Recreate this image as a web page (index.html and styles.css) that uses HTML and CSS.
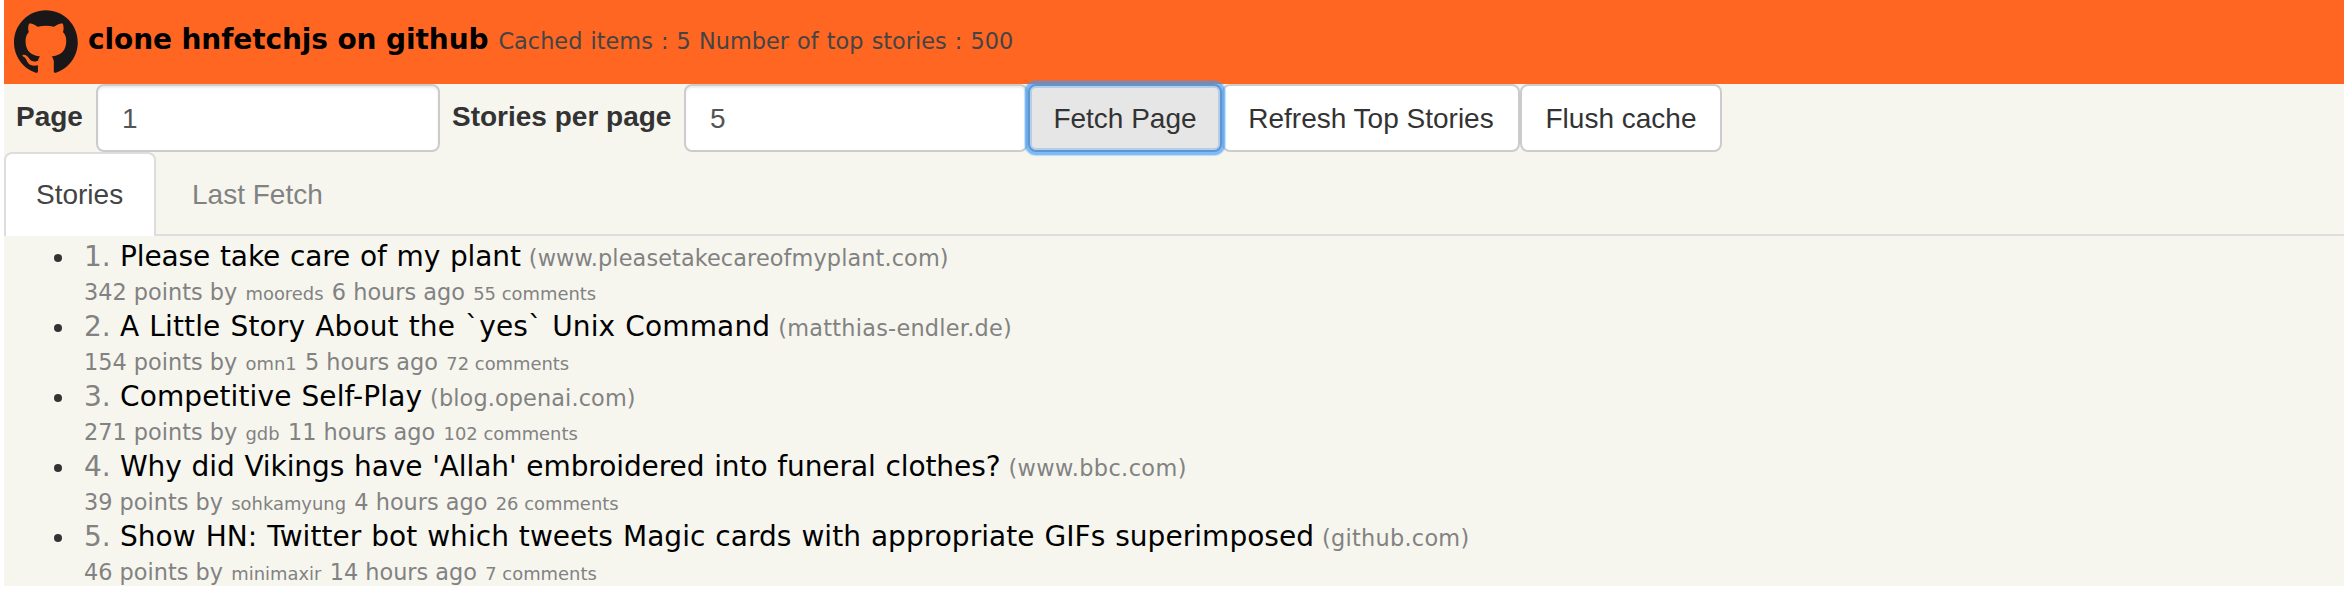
FILE: index.html
```html
<!DOCTYPE html>
<html lang="en">
<head>
<meta charset="utf-8">
<title>hnfetchjs</title>
<link rel="stylesheet" href="styles.css">
</head>
<body>
<header class="topbar">
  <svg class="logo" viewBox="0 0 98 96" aria-hidden="true"><path fill-rule="evenodd" d="M48.854 0C21.839 0 0 22 0 49.217c0 21.756 13.993 40.172 33.405 46.69 2.427.49 3.316-1.059 3.316-2.362 0-1.141-.08-5.052-.08-9.127-13.59 2.934-16.42-5.867-16.42-5.867-2.184-5.704-5.42-7.17-5.42-7.17-4.448-3.015.324-3.015.324-3.015 4.934.326 7.523 5.052 7.523 5.052 4.367 7.496 11.404 5.378 14.235 4.074.404-3.178 1.699-5.378 3.074-6.6-10.839-1.141-22.243-5.378-22.243-24.283 0-5.378 1.94-9.778 5.014-13.2-.485-1.222-2.184-6.275.486-13.038 0 0 4.125-1.304 13.426 5.052a46.97 46.97 0 0 1 12.214-1.63c4.125 0 8.33.571 12.213 1.63 9.302-6.356 13.427-5.052 13.427-5.052 2.67 6.763.97 11.816.485 13.038 3.155 3.422 5.015 7.822 5.015 13.2 0 18.905-11.404 23.06-22.324 24.283 1.78 1.548 3.316 4.481 3.316 9.126 0 6.6-.08 11.897-.08 13.526 0 1.304.89 2.853 3.316 2.364 19.412-6.52 33.405-24.935 33.405-46.691C97.707 22 75.788 0 48.854 0z"/></svg>
  <a class="brand">clone hnfetchjs on github</a>
  <span class="status">Cached items : 5 Number of top stories : 500</span>
</header>
<form class="controls">
  <label class="label label-page" for="page">Page</label>
  <input class="field" id="page" value="1">
  <label class="label label-count" for="count">Stories per page</label>
  <input class="field" id="count" value="5">
  <button class="btn btn-focus" type="button">Fetch Page</button>
  <button class="btn btn-refresh" type="button">Refresh Top Stories</button>
  <button class="btn btn-flush" type="button">Flush cache</button>
</form>
<nav class="tabs">
  <a class="tab tab-active">Stories</a>
  <a class="tab">Last Fetch</a>
</nav>
<ul class="stories">
  <li class="story story-1">
    <div class="headline"><span class="rank">1.</span><a class="title">Please take care of my plant</a><span class="site">(www.pleasetakecareofmyplant.com)</span></div>
    <div class="meta"><span>342 points by</span><a class="small">mooreds</a><span>6 hours ago</span><a class="small">55 comments</a></div>
  </li>
  <li class="story story-2">
    <div class="headline"><span class="rank">2.</span><a class="title">A Little Story About the `yes` Unix Command</a><span class="site">(matthias-endler.de)</span></div>
    <div class="meta"><span>154 points by</span><a class="small">omn1</a><span>5 hours ago</span><a class="small">72 comments</a></div>
  </li>
  <li class="story story-3">
    <div class="headline"><span class="rank">3.</span><a class="title">Competitive Self-Play</a><span class="site">(blog.openai.com)</span></div>
    <div class="meta"><span>271 points by</span><a class="small">gdb</a><span>11 hours ago</span><a class="small">102 comments</a></div>
  </li>
  <li class="story story-4">
    <div class="headline"><span class="rank">4.</span><a class="title">Why did Vikings have 'Allah' embroidered into funeral clothes?</a><span class="site">(www.bbc.com)</span></div>
    <div class="meta"><span>39 points by</span><a class="small">sohkamyung</a><span>4 hours ago</span><a class="small">26 comments</a></div>
  </li>
  <li class="story story-5">
    <div class="headline"><span class="rank">5.</span><a class="title">Show HN: Twitter bot which tweets Magic cards with appropriate GIFs superimposed</a><span class="site">(github.com)</span></div>
    <div class="meta"><span>46 points by</span><a class="small">minimaxir</a><span>14 hours ago</span><a class="small">7 comments</a></div>
  </li>
</ul>
</body>
</html>
```
FILE: styles.css
```css
* { box-sizing: border-box; }
body {
  margin: 0;
  padding-left: 4px;
  background: #fff;
  color: #333;
  font-family: "Liberation Sans", Arial, sans-serif;
  font-size: 28px;
}
.topbar {
  display: flex;
  align-items: baseline;
  height: 84px;
  padding: 10px 10px 0;
  background: #ff6622;
  font-family: "DejaVu Sans", Verdana, sans-serif;
  line-height: 40px;
  white-space: nowrap;
}
.logo { width: 64px; height: 63px; margin-right: 10px; fill: #191717; align-self: flex-start; }
.brand { padding-top: 10px; margin-right: 10px; color: #000; font-weight: bold; letter-spacing: -.1px; }
.status { color: #444; font-size: 22.4px; letter-spacing: .02px; word-spacing: .95px; }
.controls {
  display: flex;
  height: 68px;
  background: #f6f6ef;
  white-space: nowrap;
}
.label { flex: none; padding: 13px 0 0 12px; font-weight: bold; line-height: 40px; }
.label-page { width: 79px; }
.label-count { width: 231px; }
.field {
  flex: none;
  width: 344px;
  height: 68px;
  margin: 0 0 0 13px;
  padding: 1px 24px 0;
  border: 2px solid #ccc;
  border-radius: 8px;
  background: #fff;
  box-shadow: inset 0 2px 2px rgba(0, 0, 0, .075);
  color: #555;
  font: inherit;
}
.btn {
  height: 68px;
  padding: 1px 0 0;
  border: 2px solid #ccc;
  border-radius: 8px;
  background: #fff;
  color: #333;
  font: inherit;
}
.btn-focus {
  position: relative;
  width: 194px;
  border-color: #5e97d0;
  background: #e6e6e6;
  box-shadow: 0 0 0 3px rgba(59, 153, 252, .5), 0 0 1px 4px rgba(59, 153, 252, .3), inset 0 0 0 2px #b5cde6;
}
.btn-refresh { width: 298px; }
.btn-flush { width: 202px; }
.tabs { display: flex; height: 84px; background: #f6f6ef; box-shadow: inset 0 -2px #ddd; }
.tab { padding: 21px 32px; line-height: 44px; color: #828282; }
.tab-active {
  width: 152px;
  margin-right: 4px;
  padding: 19px 30px 0;
  border: 2px solid #ddd;
  border-bottom: 0;
  border-radius: 8px 8px 0 0;
  background: #fff;
  color: #444;
}
.stories {
  margin: 0;
  padding: 0 0 0 80px;
  background: #f6f6ef;
  color: #828282;
  font-family: "DejaVu Sans", Verdana, sans-serif;
  list-style: none;
}
.story { height: 70px; white-space: nowrap; position: relative; }
.story::before {
  content: "";
  position: absolute;
  left: -30px;
  top: 18px;
  width: 8px;
  height: 8px;
  border-radius: 50%;
  background: #333;
}
.headline { display: flex; align-items: baseline; height: 40px; line-height: 41px; }
.rank { width: 36px; }
.title { margin-right: 8px; color: #000; word-spacing: 1px; letter-spacing: var(--title-track); }
.site { font-size: 22.4px; letter-spacing: var(--site-track); }
.meta { display: flex; align-items: baseline; gap: 8.3px; height: 30px; line-height: 32px; font-size: 22.4px; }
.small { font-size: 17.92px; }
.story-1 { --title-track: -.11px; --site-track: .1px; }
.story-2 { --title-track: .135px; --site-track: .25px; }
.story-3 { --title-track: .11px; --site-track: .11px; }
.story-4 { --title-track: -.09px; --site-track: .4px; }
.story-5 { --title-track: .04px; --site-track: .26px; }
```
